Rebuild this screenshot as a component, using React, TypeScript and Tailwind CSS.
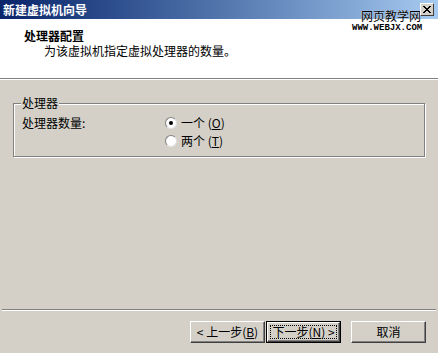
import { Fragment } from "react";

const cjk = "font-['SimSun','Noto_Sans_CJK_SC',sans-serif]";

const Btn = ({ children, primary }: { children: React.ReactNode; primary?: boolean }) => {
  if (primary) {
    return (
      <div className="w-[75px] h-[22px] border border-black">
        <div className="w-full h-full border border-t-white border-l-white border-b-[#404040] border-r-[#404040] shadow-[inset_-1px_-1px_0_#808080] bg-[#d4d0c8] flex items-center justify-center p-[2px]">
          <div className="w-full h-full border border-dotted border-black flex items-center justify-center text-[12px] leading-none text-black">
            {children}
          </div>
        </div>
      </div>
    );
  }
  return (
    <div className="w-[75px] h-[22px] border border-t-white border-l-white border-b-[#404040] border-r-[#404040] shadow-[inset_-1px_-1px_0_#808080] bg-[#d4d0c8] flex items-center justify-center text-[12px] leading-none text-black">
      {children}
    </div>
  );
};

const Radio = ({ checked }: { checked?: boolean }) => (
  <div className="w-[12px] h-[12px] rounded-full bg-white border border-t-[#808080] border-l-[#808080] border-b-[#e0e0e0] border-r-[#e0e0e0] flex items-center justify-center">
    {checked && <div className="w-[4px] h-[4px] rounded-full bg-black" />}
  </div>
);

export default function App() {
  return (
    <div className={`w-[438px] h-[353px] bg-[#d4d0c8] flex flex-col ${cjk} text-black relative overflow-hidden`}>
      {/* title bar */}
      <div className="h-[19px] bg-gradient-to-r from-[#0a246a] to-[#a6caf0] flex items-center pl-[3px]">
        <span className="text-white font-bold text-[12px] leading-none">新建虚拟机向导</span>
      </div>

      {/* header */}
      <div className="h-[59px] bg-white pl-[24px] pt-[10px] flex flex-col">
        <span className="font-bold text-[12px] leading-[14px]">处理器配置</span>
        <span className="text-[12px] leading-[14px] mt-[1px] pl-[20px]">为该虚拟机指定虚拟处理器的数量。</span>
      </div>
      <div className="h-px bg-[#808080]" />
      <div className="h-px bg-white" />

      {/* body */}
      <div className="flex-1 flex flex-col px-[13px] pt-[23px]">
        <div className="relative h-[54px] border border-[#808080] shadow-[inset_1px_1px_0_#fff,1px_1px_0_#fff] mr-[0px] w-[412px]">
          <span className="absolute -top-[8px] left-[7px] bg-[#d4d0c8] px-[1px] text-[12px] leading-[14px]">处理器</span>
          <div className="flex pt-[12px] pl-[8px]">
            <span className="w-[143px] text-[12px] leading-[14px]">处理器数量:</span>
            <div className="flex flex-col gap-[4px]">
              {[
                { t: "一个", k: "O", c: true },
                { t: "两个", k: "T", c: false },
              ].map((r) => (
                <div key={r.k} className="flex items-center gap-[4px] h-[14px]">
                  <Radio checked={r.c} />
                  <span className="text-[12px] leading-none">
                    {r.t} (<span className="underline">{r.k}</span>)
                  </span>
                </div>
              ))}
            </div>
          </div>
        </div>
      </div>

      {/* footer */}
      <div className="h-px bg-[#808080] mx-[2px]" />
      <div className="h-px bg-white mx-[2px]" />
      <div className="h-[42px] flex items-start justify-end pt-[10px] pr-[12px]">
        <div className="flex gap-[1px]">
          <Btn>
            <Fragment>&lt; 上一步(<span className="underline">B</span>)</Fragment>
          </Btn>
          <Btn primary>
            <Fragment>下一步(<span className="underline">N</span>) &gt;</Fragment>
          </Btn>
        </div>
        <div className="ml-[10px]">
          <Btn>取消</Btn>
        </div>
      </div>

      {/* watermark */}
      <div className="absolute top-[9px] left-[360px] flex flex-col items-center">
        <span className="text-[12px] leading-[13px] text-black [text-shadow:0_0_1px_#fff]">网页教学网</span>
        <span className="font-['Liberation_Mono',monospace] font-bold text-[9px] leading-[9px] mt-[2px] -ml-[8px]">WWW.WEBJX.COM</span>
      </div>
      <div className="absolute top-[3px] left-[420px] w-[14px] h-[13px] bg-[#d4d0c8] border border-t-white border-l-white border-b-[#404040] border-r-[#404040] flex items-center justify-center">
        <svg width="8" height="7" viewBox="0 0 8 7">
          <path d="M0 0L7 7M1 0L8 7M7 0L0 7M8 0L1 7" stroke="#000" strokeWidth="1" />
        </svg>
      </div>
    </div>
  );
}
